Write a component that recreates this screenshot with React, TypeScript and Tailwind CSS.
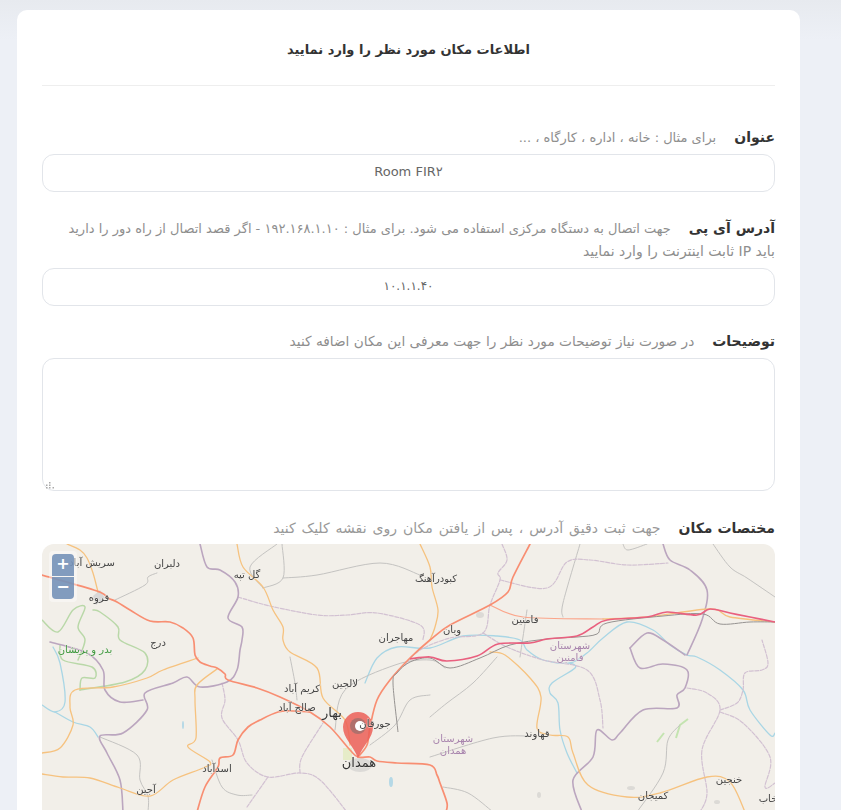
const FONT = "font-['DejaVu_Sans','Noto_Sans',sans-serif]";

const roads = {
  trunk: [
    "M42 575 L97 591 L108 598 L117 602 L130 610 L150 621 L170 622 L183 628 L193 638 L195 655 L200 662 L210 666 L217 668 L225 674 L228 680 L257 688 L280 697 L310 712 L330 727 L350 750 L358 757 L370 757 L377 761 L397 763 L430 765 L437 775 L440 783 L447 803 L446 812",
    "M197 812 L205 787 L218 767 L220 758 L233 755 L238 740 L248 727 L260 720 L278 712 L293 711 L310 712",
    "M358 757 L367 745 L370 727 L377 700 L390 680 L410 658 L430 640 L450 625 L490 605 L508 592 L513 577 L530 544",
  ],
  thin: ["M490 605 L523 617 L603 619"],
  secondary: [
    "M67 544 L80 550 L87 558 L93 573 L98 592",
    "M237 544 L243 567 L263 587 L273 610 L283 627 L283 640 L290 652 L317 668 L323 698 L345 720 L350 745",
    "M420 544 L430 567 L432 587 L438 610 L435 627 L430 640",
    "M42 753 L60 748 L73 725 L70 707 L75 690 L113 687 L147 678 L163 670 L198 658",
    "M42 774 L63 777 L90 778 L120 788 L150 796 L173 780 L203 768 L210 762 L188 747 L196 738 L195 700 L197 685 L217 669",
    "M490 652 L505 655 L530 678 L541 697 L537 728 L550 735 L568 737 L573 753 L588 785 L627 797 L660 793 L707 777 L730 782 L745 812",
    "M603 619 L647 617 L710 609 L730 617 L775 622",
  ],
  gray: [
    "M115 600 L145 585 L148 577 L157 573",
    "M277 544 L250 567 L263 588",
    "M282 544 L283 578 L263 588",
    "M283 578 L317 575 L380 563 L420 575",
    "M580 544 L563 603 L563 617",
    "M527 610 L520 657",
    "M713 544 L730 567 L747 578 L775 597",
    "M623 544 L628 550 L647 544",
    "M430 717 L447 703 L473 683 L497 657",
    "M370 745 L395 725 L410 700 L430 695",
    "M430 757 L493 738 L530 736",
    "M443 787 L468 793 L493 812",
    "M637 812 L663 773 L668 740 L680 725",
    "M100 737 L137 755 L140 780 L148 796 L148 812",
    "M212 760 L222 787 L237 795 L252 795",
    "M290 657 L295 683 L297 700",
    "M335 730 L345 690 L395 665 L430 660 L445 668",
  ],
  boundary: [
    "M200 544 L207 567 L220 570 L235 582 L238 597 L228 618 L242 627 L242 640 L240 650 L237 670 L227 682 L200 687 L187 677 L173 683 L145 693 L147 710 L123 733 L100 736 L107 753 L120 780 L123 812",
    "M50 642 L87 653 L103 670 L105 690 L120 702 L143 700",
    "M663 544 L670 560 L690 570 L707 590 L702 620 L687 655",
    "M630 648 L647 633 L663 640 L685 655",
    "M630 648 L640 668 L663 664 L687 670 L685 688 L677 695 L677 708 L643 710 L620 733 L612 740 L597 730 L593 757 L573 780 L582 812",
  ],
  dashed: [
    "M238 597 L270 606 L317 615 L347 615 L377 613 L420 625 L423 640",
    "M502 544 L507 560 L498 573 L500 580 L490 605 L483 633 L450 638 L420 650 L405 665",
    "M500 580 L547 588 L567 562 L590 560 L627 565 L668 563",
    "M483 633 L507 647 L543 660 L587 670 L600 700 L603 728",
    "M687 688 L707 693 L720 710 L702 750 L707 793 L700 812",
    "M720 712 L743 723 L770 757 L765 787 L775 783",
    "M720 710 L737 703 L743 690 L745 673 L762 670 L768 663 L762 640",
    "M222 683 L225 700 L222 718 L238 740 L247 763 L268 777 L300 773 L320 780 L347 812",
    "M268 777 L247 807",
    "M300 773 L302 757 L323 723",
  ],
  river: [
    "M42 705 L55 712 L65 702 L60 663 L53 647",
    "M55 712 L73 722 L90 727 L98 737",
    "M365 683 L377 658 L397 647 L430 648 L463 636 L497 636 L520 640 L527 650 L543 660 L570 663 L587 653 L603 638 L627 622 L653 630 L670 645 L687 655 L697 657 L720 670 L743 690 L750 710 L770 735 L775 733",
    "M570 663 L575 668 L552 683 L550 693 L558 703 L560 730 L567 753 L577 773",
  ],
  green: [
    "M42 620 L58 632 L73 610 L85 607 L78 627 L85 640 L78 660",
    "M80 690 L82 678 L95 678 L92 667 L63 660 L60 645",
    "M93 610 L100 612 L118 627 L120 640 L145 653 L145 670 L125 682 L80 690",
  ],
};

function smooth(d: string) {
  const n = (d.match(/-?\d+(\.\d+)?/g) ?? []).map(Number);
  const p: [number, number][] = [];
  for (let i = 0; i + 1 < n.length; i += 2) p.push([n[i], n[i + 1]]);
  let out = `M${p[0][0]} ${p[0][1]}`;
  for (let i = 0; i < p.length - 1; i++) {
    const a = p[Math.max(i - 1, 0)], b = p[i], c = p[i + 1], e = p[Math.min(i + 2, p.length - 1)];
    out += ` C${b[0] + (c[0] - a[0]) / 6} ${b[1] + (c[1] - a[1]) / 6} ${c[0] - (e[0] - b[0]) / 6} ${c[1] - (e[1] - b[1]) / 6} ${c[0]} ${c[1]}`;
  }
  return out;
}

const labels: [number, number, string, string?, number?][] = [
  [92, 566, "سریش آباد"], [167, 567, "دلبران"], [247, 578, "گل تپه"], [436, 582, "کبودرآهنگ"],
  [99, 601, "قروه"], [158, 646, "درج"], [396, 641, "مهاجران"], [452, 633, "ویان"], [525, 623, "فامنین"],
  [345, 687, "لالجین"], [302, 692, "کریم آباد"], [297, 711, "صالح آباد"], [332, 717, "بهار", "#333", 13],
  [375, 727, "جورقان"], [359, 767, "همدان", "#333", 13], [537, 737, "قهاوند"], [217, 772, "اسدآباد"],
  [146, 793, "آجین"], [653, 799, "کمیجان"], [729, 783, "خنجین"], [768, 802, "خاب"],
  [85, 653, "بدر و پریشان", "#3f9a3f"], [570, 649, "شهرستان", "#a884ad"], [570, 661, "فامنین", "#a884ad"],
  [453, 742, "شهرستان", "#a884ad"], [453, 754, "همدان", "#a884ad"],
];

const inputClass = "block w-full h-[38px] pb-[3px] rounded-xl border border-[#e2e5ea] text-center text-[#666] outline-none";

function MapDrawing() {
  const group = (list: string[], color: string, width: number, dash?: string) =>
    list.map((d, i) => (
      <path key={i} d={smooth(d)} fill="none" stroke={color} strokeWidth={width} strokeLinejoin="round" strokeLinecap="round" strokeDasharray={dash} />
    ));
  return (
    <svg viewBox="42 544 733 300" className="block w-full h-full blur-[0.35px]">
      <rect x="42" y="544" width="733" height="300" fill="#f2efe9" />
      <path d="M343 748 L352 748 L352 760 L343 760 Z" fill="#e6ecc8" />
      <ellipse cx="360" cy="765" rx="12" ry="7" fill="#dcdad7" />
      <path d="M93 596 L100 590 L105 598 L96 605 Z" fill="#d8d8d8" />
      <ellipse cx="183" cy="725" rx="1" ry="4" fill="#b5d8e6" />
      <ellipse cx="391" cy="782" rx="2" ry="5" fill="#b5d8e6" />
      <ellipse cx="631" cy="788" rx="4" ry="2" fill="#dcdad6" />
      <ellipse cx="717" cy="802" rx="3" ry="2" fill="#dcdad6" />
      <ellipse cx="480" cy="615" rx="4" ry="3" fill="#dcdad6" />
      <ellipse cx="539" cy="795" rx="2" ry="3" fill="#dcdad6" />
      <path d="M657 742 L664 733 M676 738 L680 725 L688 719" stroke="#c4e4b0" strokeWidth="2" fill="none" />
      {group(roads.green, "#b9d8a8", 1.5)}
      {group(roads.river, "#a9d6e5", 1.3)}
      {group(roads.gray, "#c4c3c1", 1)}
      {group(roads.dashed, "#d2c1d2", 1.2, "4 1.5")}
      {group(roads.boundary, "#bba6bf", 1.6)}
      {group(roads.secondary, "#f6c27f", 1.3)}
      {group(roads.thin, "#fba58a", 1.2)}
      {group(roads.trunk, "#f88e72", 1.7)}
      <path d={smooth("M775 622 L750 622 L720 624 L703 614 L663 616 L607 623 L597 634 L577 637 L547 639 L510 645 L480 658 L450 668 L430 658 L410 662 L397 673 L393 683 L398 732")} fill="none" stroke="#969391" strokeWidth="1" />
      <path d={smooth("M775 622 L750 617 L730 613 L710 609 L697 615 L667 612 L647 617 L607 620 L593 627 L577 636 L547 639 L530 643 L498 644 L477 656 L447 661 L430 657 L410 659")} fill="none" stroke="#e9607f" strokeWidth="1.7" strokeLinejoin="round" />
      <path d="M358 758 C353 745 343 738 343 727 A15 15 0 0 1 373 727 C373 738 363 745 358 758 Z" fill="#ec5f57" opacity="0.85" />
      <circle cx="358" cy="726" r="8" fill="#a06f6b" opacity="0.8" />
      <circle cx="360" cy="726" r="5" fill="#fff" />
      {labels.map(([x, y, t, c, s], i) => (
        <text key={i} x={x} y={y} textAnchor="middle" fontSize={s ?? 10} fill={c ?? "#444"} stroke="#f2efe9" strokeOpacity="0.6" strokeWidth="1.2" paintOrder="stroke" fontFamily="DejaVu Sans, sans-serif">
          {t}
        </text>
      ))}
    </svg>
  );
}

export default function App() {
  const labelRow = "text-[#8e8e8e] leading-[23px]";
  const labelTitle = "inline-block text-[14px] font-bold text-[#333] ml-[18px] [word-spacing:normal]";
  return (
    <div dir="rtl" className={`h-[810px] overflow-hidden bg-[linear-gradient(#e7eaef,#edf0f6_40px)] ${FONT}`}>
      <div className="w-[841px] pt-[10px] pr-[41px] pl-[17px]">
        <div className="bg-white rounded-[10px] px-[25px] pb-8">
          <h1 className="h-[76px] flex items-center justify-center pt-1 text-[13px] font-bold text-[#333] border-b border-[#eeeeee]">
            اطلاعات مکان مورد نظر را وارد نمایید
          </h1>

          <div className="pt-[40px]">
            <p className={`${labelRow} text-[13px] mb-[5px]`}>
              <span className={labelTitle}>عنوان</span>
              برای مثال : خانه ، اداره ، کارگاه ، ...
            </p>
            <input readOnly value="Room FIR۲" className={`${inputClass} text-[13px]`} />
          </div>

          <div className="pt-[25px]">
            <p className={`${labelRow} text-[13px] mb-[5px]`}>
              <span className={labelTitle}>آدرس آی پی</span>
              جهت اتصال به دستگاه مرکزی استفاده می شود. برای مثال : ۱۹۲.۱۶۸.۱.۱۰ - اگر قصد اتصال از راه دور را دارید
              <br />
              <span className="text-[14px]">باید IP ثابت اینترنت را وارد نمایید</span>
            </p>
            <input readOnly value="۱۰.۱.۱.۴۰" className={`${inputClass} text-[12px]`} />
          </div>

          <div className="pt-[24px]">
            <p className={`${labelRow} text-[13.7px] mb-[5px]`}>
              <span className={labelTitle}>توضیحات</span>
              در صورت نیاز توضیحات مورد نظر را جهت معرفی این مکان اضافه کنید
            </p>
            <div className="relative">
              <textarea className="block w-full h-[133px] rounded-xl border border-[#e2e5ea] outline-none resize-none" />
              <svg width="9" height="7" viewBox="0 0 9 7" className="absolute left-[4px] bottom-[2px]" fill="#a9a9a9">
                <rect x="3" y="0" width="1.5" height="1.5" />
                <rect x="0" y="2.5" width="1.5" height="1.5" />
                <rect x="3" y="2.5" width="1.5" height="1.5" />
                <rect x="0" y="5" width="1.5" height="1.5" />
                <rect x="3" y="5" width="1.5" height="1.5" />
                <rect x="6.5" y="5" width="1.5" height="1.5" />
              </svg>
            </div>
          </div>

          <div className="pt-[26px]">
            <p className={`${labelRow} text-[14px] [word-spacing:1.5px] text-[#999] mb-[4px]`}>
              <span className={labelTitle}>مختصات مکان</span>
              جهت ثبت دقیق آدرس ، پس از یافتن مکان روی نقشه کلیک کنید
            </p>
            <div className="relative h-[300px] rounded-xl overflow-hidden">
              <MapDrawing />
              <div dir="ltr" className="absolute left-[7px] top-[7px] flex flex-col gap-px p-[3px] rounded bg-white/40">
                <div className="w-[22px] h-[22px] rounded-t bg-[#6d8cb5]/85 text-white text-[16px] font-bold leading-[20px] text-center">+</div>
                <div className="w-[22px] h-[22px] rounded-b bg-[#6d8cb5]/85 text-white text-[16px] font-bold leading-[20px] text-center">−</div>
              </div>
            </div>
          </div>
        </div>
      </div>
    </div>
  );
}
